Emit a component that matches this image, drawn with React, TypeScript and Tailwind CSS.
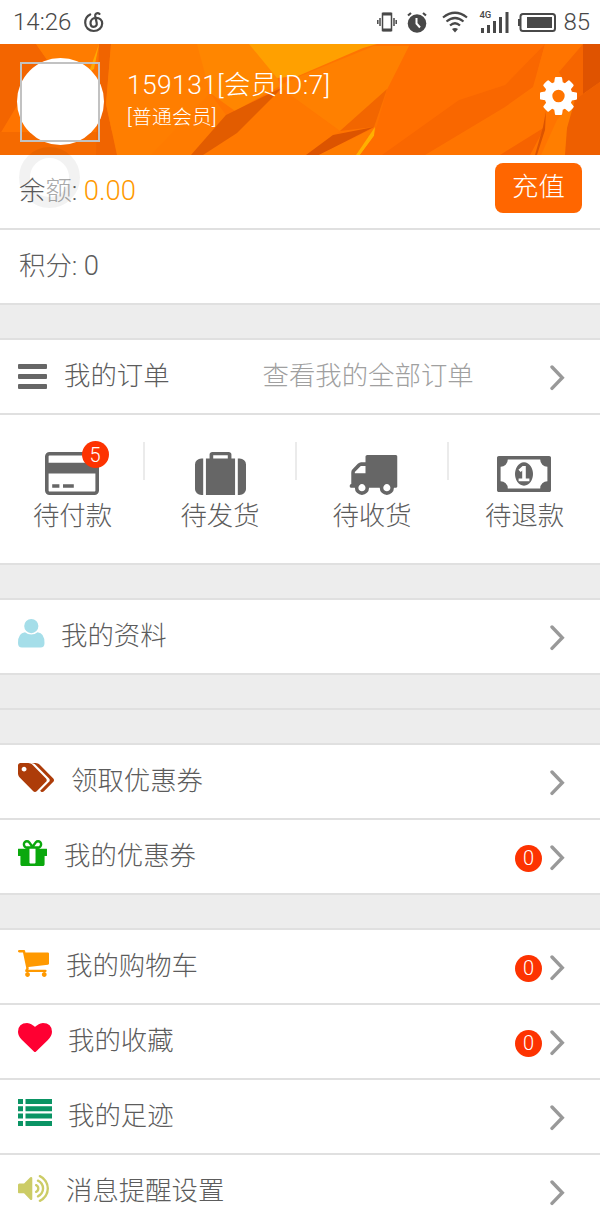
import type { ReactNode } from "react"

const icons = {
  cog: {
    box: "128 128 1536 1536",
    d: "M1152 896q0-106-75-181t-181-75-181 75-75 181 75 181 181 75 181-75 75-181zm512-109v222q0 12-8 23t-20 13l-185 28q-19 54-39 91 35 50 107 138 10 12 10 25t-9 23q-27 37-99 108t-94 71q-12 0-26-9l-138-108q-44 23-91 38-16 136-29 186-7 28-36 28h-222q-14 0-24.500-8.500t-11.500-21.500l-28-184q-49-16-90-37l-141 107q-10 9-25 9-14 0-25-11-126-114-165-168-7-10-7-23 0-12 8-23 15-21 51-66.500t54-70.500q-27-50-41-99l-183-27q-13-2-21-12.500t-8-23.500v-222q0-12 8-23t19-13l186-28q14-46 39-92-40-57-107-138-10-12-10-24 0-10 9-23 26-36 98.500-107.500t94.500-71.500q13 0 26 10l138 107q44-23 91-38 16-136 29-186 7-28 36-28h222q14 0 24.500 8.500t11.500 21.500l28 184q49 16 90 37l142-107q9-9 24-9 13 0 25 10 129 119 165 170 7 8 7 22 0 12-8 23-15 21-51 66.500t-54 70.500q26 50 41 98l183 28q13 2 21 12.500t8 23.500z",
  },
  bars: {
    box: "0 0 29 25",
    d: "M1 0h27q1 0 1 1v3q0 1-1 1H1q-1 0-1-1V1q0-1 1-1zM1 10h27q1 0 1 1v3q0 1-1 1H1q-1 0-1-1v-3q0-1 1-1zM1 20h27q1 0 1 1v3q0 1-1 1H1q-1 0-1-1v-3q0-1 1-1z",
  },
  card: {
    box: "0 128 1920 1536",
    d: "M1760 128q66 0 113 47t47 113v1216q0 66-47 113t-113 47h-1600q-66 0-113-47t-47-113v-1216q0-66 47-113t113-47h1600zm-1600 128q-13 0-22.500 9.500t-9.500 22.500v224h1664v-224q0-13-9.500-22.500t-22.500-9.500h-1600zm1600 1280q13 0 22.500-9.500t9.500-22.500v-608h-1664v608q0 13 9.500 22.500t22.500 9.500h1600zm-1504-128v-128h256v128h-256zm384 0v-128h384v128h-384z",
  },
  suitcase: {
    box: "0 0 1792 1664",
    d: "M640 256h512v-128h-512v128zm-352 0v1408h-64q-92 0-158-66t-66-158v-960q0-92 66-158t158-66h64zm1120 0v1408h-1024v-1408h128v-160q0-40 28-68t68-28h576q40 0 68 28t28 68v160h128zm384 224v960q0 92-66 158t-158 66h-64v-1408h64q92 0 158 66t66 158z",
  },
  truck: {
    box: "64 256 1728 1408",
    d: "M640 1408q0-52-38-90t-90-38-90 38-38 90 38 90 90 38 90-38 38-90zm-384-512h384v-256h-158q-13 0-22 9l-195 195q-9 9-9 22v30zm1280 512q0-52-38-90t-90-38-90 38-38 90 38 90 90 38 90-38 38-90zm256-1088v1024q0 15-4 26.500t-13.500 18.500-16.500 11.500-23.500 6-22.500 2-25.500 0-22.500-.5q0 106-75 181t-181 75-181-75-75-181h-384q0 106-75 181t-181 75-181-75-75-181h-64q-3 0-22.500.5t-25.500 0-22.500-2-23.500-6-16.500-11.500-13.500-18.500-4-26.500q0-26 19-45t45-19v-320q0-8-.5-35t0-38 2.500-34.500 6.500-37 14-30.500 22.500-30l198-198q19-19 50.500-32t58.500-13h160v-192q0-26 19-45t45-19h1024q26 0 45 19t19 45z",
  },
  money: {
    box: "0 256 1920 1280",
    d: "M768 1152h384v-96h-128v-448h-114l-148 137 77 80q42-37 55-57h2v288h-128v96zm512-256q0 70-21 142t-59.500 134-101.500 101-138 39-138-39-101.500-101-59.500-134-21-142 21-142 59.500-134 101.500-101 138-39 138 39 101.500 101 59.500 134 21 142zm512 256v-512q-106 0-181-75t-75-181h-1152q0 106-75 181t-181 75v512q106 0 181 75t75 181h1152q0-106 75-181t181-75zm128-832v1152q0 26-19 45t-45 19h-1792q-26 0-45-19t-19-45v-1152q0-26 19-45t45-19h1792q26 0 45 19t19 45z",
  },
  user: {
    box: "0 0 27 29",
    d: "M13.300 0a7 7 0 1 1 0 14.200a7 7 0 1 1 0-14.200zM7 13.200Q9.800 15.600 13.300 15.600T19.600 13.200Q26.500 13.800 26.500 24Q26.500 28.500 22.500 28.500H4Q0 28.500 0 24Q0 13.800 7 13.200z",
  },
  tags: {
    box: "128 128 1899 1515",
    d: "M576 448q0-53-37.500-90.500t-90.500-37.500-90.500 37.500-37.500 90.500 37.500 90.500 90.500 37.500 90.500-37.500 37.500-90.500zm1067 576q0 53-37 90l-491 492q-39 37-91 37-53 0-90-37l-715-716q-38-37-64.500-101t-26.500-117v-416q0-52 38-90t90-38h416q53 0 117 26.500t102 64.500l715 714q37 39 37 91zm384 0q0 53-37 90l-491 492q-39 37-91 37-36 0-59-14t-53-45l470-470q37-37 37-90 0-52-37-91l-715-714q-38-38-102-64.500t-117-26.500h224q53 0 117 26.500t102 64.500l715 714q37 39 37 91z",
  },
  gift: {
    box: "128 192 1536 1344",
    d: "M1056 1356v-716h-320v716q0 25 18 38.500t46 13.500h192q28 0 46-13.500t18-38.500zm-456-844h195l-126-161q-26-31-69-31-40 0-68 28t-28 68 28 68 68 28zm688-96q0-40-28-68t-68-28q-43 0-69 31l-125 161h194q40 0 68-28t28-68zm376 256v320q0 14-9 23t-23 9h-96v416q0 40-28 68t-68 28h-1088q-40 0-68-28t-28-68v-416h-96q-14 0-23-9t-9-23v-320q0-14 9-23t23-9h440q-93 0-158.500-65.500t-65.500-158.500 65.500-158.500 158.500-65.500q107 0 168 77l128 165 128-165q61-77 168-77 93 0 158.500 65.500t65.500 158.500-65.500 158.500-158.500 65.500h440q14 0 23 9t9 23z",
  },
  cart: {
    box: "64 256 1664 1408",
    d: "M704 1536q0 52-38 90t-90 38-90-38-38-90 38-90 90-38 90 38 38 90zm896 0q0 52-38 90t-90 38-90-38-38-90 38-90 90-38 90 38 38 90zm128-1088v512q0 24-16.500 42.500t-40.500 21.500l-1044 122q13 60 13 70 0 16-24 64h920q26 0 45 19t19 45-19 45-45 19h-1024q-26 0-45-19t-19-45q0-11 8-31.500t16-36 21.500-40 15.500-29.500l-177-823h-204q-26 0-45-19t-19-45 19-45 45-19h256q16 0 28.500 6.500t19.500 15.500 13 24.500 8 26 5.500 29.500 4.500 26h1201q26 0 45 19t19 45z",
  },
  heart: {
    box: "0 128 1792 1536",
    d: "M896 1664q-26 0-44-18l-624-602q-10-8-27.500-26t-55.500-65.500-68-97.500-53.500-121-23.500-138q0-220 127-344t351-124q62 0 126.500 21.500t120 58 95.500 68.500 76 68q36-36 76-68t95.500-68.500 120-58 126.500-21.500q224 0 351 124t127 344q0 221-229 450l-623 600q-18 18-44 18z",
  },
  list: {
    box: "0 0 34 27",
    d: "M0 0h5v5H0zM7.500 0H34v5H7.500zM0 7.300h5v5H0zM7.500 7.300H34v5H7.500zM0 14.600h5v5H0zM7.500 14.600H34v5H7.500zM0 22h5v5H0zM7.500 22H34v5H7.500z",
  },
  volume: {
    box: "64 186 1664 1422",
    d: "M832 352v1088q0 26-19 45t-45 19-45-19l-333-333h-262q-26 0-45-19t-19-45v-384q0-26 19-45t45-19h262l333-333q19-19 45-19t45 19 19 45zm384 544q0 76-42.500 141.500t-112.500 93.500q-10 5-25 5-26 0-45-18.500t-19-45.500q0-21 12-35.500t29-25 34-23 29-36 12-56.500-12-56.500-29-36-34-23-29-25-12-35.500q0-27 19-45.500t45-18.500q15 0 25 5 70 27 112.500 93t42.500 142zm256 0q0 153-85 282.500t-225 188.500q-13 5-25 5-27 0-46-19t-19-45q0-39 39-59 56-29 76-44 74-54 115.500-135.500t41.500-173.500-41.500-173.500-115.500-135.500q-20-15-76-44-39-20-39-59 0-26 19-45t45-19q13 0 26 5 140 59 225 188.500t85 282.500zm256 0q0 230-127 422.500t-338 283.500q-13 5-26 5-26 0-45-19t-19-45q0-36 39-59 7-4 22.500-10.500t22.500-10.500q46-25 82-51 123-91 192-227t69-289-69-289-192-227q-36-26-82-51-7-4-22.500-10.500t-22.500-10.500q-39-23-39-59 0-26 19-45t45-19q13 0 26 5 211 91 338 283.500t127 422.500z",
  },
}

type IconName = keyof typeof icons

function Icon({ name, className }: { name: IconName; className: string }) {
  return (
    <svg viewBox={icons[name].box} preserveAspectRatio="none" fill="currentColor" className={className}>
      <path d={icons[name].d} />
    </svg>
  )
}

function Chevron() {
  return (
    <svg viewBox="0 0 16 26" className="mt-0.5 h-[26px] w-4 shrink-0 text-[#999]" fill="none" stroke="currentColor" strokeWidth="3.4">
      <path d="M2 2 12.300 12.700 2 23.400" strokeLinecap="round" />
    </svg>
  )
}

function Badge({ children, className = "" }: { children: ReactNode; className?: string }) {
  return (
    <span className={`flex size-[27px] items-center justify-center rounded-full bg-[#fd3301] text-xl leading-none text-white ${className}`}>
      {children}
    </span>
  )
}

type RowProps = {
  icon: IconName
  iconClass: string
  label: string
  hint?: string
  count?: number
}

function Row({ icon, iconClass, label, hint, count }: RowProps) {
  return (
    <div className="flex h-[75px] items-center border-b-2 border-[#e0e0e0] bg-white pr-[34px] pl-[18px]">
      <Icon name={icon} className={`shrink-0 ${iconClass}`} />
      <span>{label}</span>
      {hint && <span className="ml-[93px] text-[#a0a0a0]">{hint}</span>}
      <div className="ml-auto flex items-center gap-2">
        {count !== undefined && <Badge className="mt-[3px]">{count}</Badge>}
        <Chevron />
      </div>
    </div>
  )
}

const orders: { icon: IconName; iconClass: string; label: string; count?: number }[] = [
  { icon: "card", iconClass: "h-[43px] w-[54px]", label: "待付款", count: 5 },
  { icon: "suitcase", iconClass: "h-[43px] w-[51px] translate-x-px", label: "待发货" },
  { icon: "truck", iconClass: "h-10 w-12 translate-x-[2.5px]", label: "待收货" },
  { icon: "money", iconClass: "h-9 w-[54px]", label: "待退款" },
]

const sections: RowProps[][] = [
  [{ icon: "user", iconClass: "mr-4 mb-[7px] h-[29px] w-[27px] text-[#a5dee9]", label: "我的资料" }],
  [],
  [
    { icon: "tags", iconClass: "mr-[17px] mb-2 h-[29px] w-9 text-[#ad3c09]", label: "领取优惠券" },
    { icon: "gift", iconClass: "mr-[17px] mb-2 h-[26px] w-[29px] text-[#0aa80d]", label: "我的优惠券", count: 0 },
  ],
  [
    { icon: "cart", iconClass: "mr-[17px] mb-1.5 h-[27px] w-[31px] text-[#ff9900]", label: "我的购物车", count: 0 },
    { icon: "heart", iconClass: "mr-4 mb-2 h-[29px] w-[34px] text-[#ff0032]", label: "我的收藏", count: 0 },
    { icon: "list", iconClass: "mr-4 mb-2 h-[27px] w-[34px] text-[#0a9464]", label: "我的足迹" },
    { icon: "volume", iconClass: "mr-[17px] mb-1.5 h-[27px] w-[31px] text-[#cccc66]", label: "消息提醒设置" },
  ],
]

function StatusBar() {
  return (
    <div className="flex h-11 items-center bg-white text-[#484848]">
      <span className="ml-[13px] w-[59px] text-[24px]">14:26</span>
      <svg viewBox="0 0 20 22" className="ml-3 h-[22px] w-5" fill="none" stroke="currentColor" strokeWidth="2.200" strokeLinecap="round">
        <path d="M6.200 3.500C3 5 1.200 8 1.200 11.700 1.200 16.500 5 20 9.700 20s8.500-3.300 8.500-7.500C18.200 9 15.500 6.800 12 6.800 8.500 6.800 6.500 9.500 6.500 12.200c0 2 1.200 3.600 3.200 3.600s3.500-1.400 3-3.800L11.200 5C10.800 2.800 13.200 1.200 15.500 2.800" />
      </svg>
      <svg viewBox="0 0 20 20" className="ml-auto h-5 w-5" fill="none" stroke="currentColor" strokeWidth="1.500">
        <path d="M5.500 1.500h9v17h-9zM3 6v8M.800 8v4M17 6v8M19.200 8v4" />
        <path d="M5.500 2h9M5.500 18h9" strokeWidth="3" />
      </svg>
      <svg viewBox="0 0 20 22" className="ml-2.5 h-[22px] w-5">
        <circle cx="10" cy="12.500" r="9.300" fill="currentColor" />
        <path d="M1 4.500 4 2M19 4.500 16 2" stroke="currentColor" strokeWidth="2.200" />
        <path d="M9.500 7v5.500l3.500 4" fill="none" stroke="#fff" strokeWidth="2" />
      </svg>
      <svg viewBox="0 0 26 22" className="ml-[15px] h-[22px] w-[26px]" fill="none" stroke="currentColor" strokeWidth="2.200">
        <path d="M1 6.500Q13-3 25 6.500M4.500 10.500Q13 3.500 21.500 10.500M8 14.500Q13 10 18 14.500" />
        <path d="M10 18Q13 16 16 18L13 21.500z" fill="currentColor" stroke="none" />
      </svg>
      <div className="relative ml-[11px] h-[22px] w-[30px]">
        <span className="absolute -top-0.5 left-0 text-[9.500px] leading-[12px] font-medium">4G</span>
        <svg viewBox="0 0 30 22" className="size-full" fill="currentColor">
          <path d="M2 17h3v5H2zM8 14h3v8H8zM14 10h3v12h-3zM20 6h3v16h-3zM26.500 1h3v21h-3z" />
        </svg>
      </div>
      <svg viewBox="0 0 38 19" className="ml-[9px] h-[19px] w-[38px]" fill="none" stroke="currentColor" strokeWidth="2">
        <rect x="2.500" y="1" width="34.500" height="17" rx="2.500" />
        <path d="M1 6v7" />
        <rect x="9" y="4" width="25" height="11" fill="currentColor" stroke="none" />
      </svg>
      <span className="mr-2.5 ml-[7px] text-[24px]">85</span>
    </div>
  )
}

function HeaderArt() {
  return (
    <svg viewBox="0 0 600 111" preserveAspectRatio="none" className="absolute inset-0 size-full">
      <path fill="#ff7400" d="M0 0h600v111H0z" />
      <path fill="#f36500" d="M0 0h36l14 20L18 60 0 90z" />
      <path fill="#ff7c00" d="M36 0h64L90 32 50 20z" />
      <path fill="#f56a00" d="M0 88h115l5 23H0z" />
      <path fill="#f06400" d="M99 0h12l-5 60 11 51H96z" />
      <path fill="#ffa800" d="M99 0 89 28l5-3z" />
      <path fill="#ff7e00" d="M111 0h87l12 50-19 61h-74l-11-51z" />
      <path fill="#ff8600" d="M197 0h54l26 32 3 10-45 25-25-18z" />
      <path fill="#ff7b00" d="m210 49 16 22-35 40h-40z" />
      <path fill="#ff7800" d="m279 43 61 44-34 24H203l34-22z" />
      <path fill="#ff8000" d="M374 2h36l-23 44-47 41-62-45 20-9z" />
      <path fill="#ffa000" d="M249 0h128l-14 4-65 28-21 2z" />
      <path fill="#e25c00" d="m283 43-46 46-34 22h-12l35-40z" />
      <path fill="#f26600" d="m387 45-13 38-34 4z" />
      <path fill="#dc5400" d="m374 83-41 8-27 20h13z" />
      <path fill="#ff7c00" d="m374 84-55 27h37z" />
      <path fill="#ffb000" d="m375 83-1 9-14 19h-4z" />
      <path fill="#ff6e00" d="M410 0h135l-40 41-46 15-53 55h-46l14-19 13-46z" />
      <path fill="#f96700" d="m545 0-12 43-28 20-80 48h-43l77-55 46-15z" />
      <path fill="#f66300" d="m545 83-15 28h-30z" />
      <path fill="#ff7400" d="M545 0h35l-22 28 17 28-10 55h-28l8-35-7-50z" />
      <path fill="#f66500" d="M583 0v52l-9 5-15-29z" />
      <path fill="#ff7e00" d="m574 57-17 19-16 35h24z" />
      <path fill="#ee5f00" d="M600 38v73h-35l2-27 8-28z" />
      <path fill="#df5300" d="M583 0h17v38l-17 12z" />
      <path fill="#dc5400" d="m546 67-1 19-8 25h-2l8-28z" />
    </svg>
  )
}

export default function App() {
  return (
    <div className="h-[1226px] w-[600px] overflow-hidden bg-[#ededed] font-['Roboto','Noto_Sans_CJK_SC',sans-serif] text-[26.4px] font-light text-[#5c5c5c]">
      <StatusBar />

      <header className="relative flex h-[111px] items-center">
        <HeaderArt />
        <div className="relative mt-[3px] ml-[17px] size-[87px] rounded-full bg-white pt-1 pl-[3px]">
          <div className="size-20 border-2 border-[#c2c2c2]" />
        </div>
        <div className="relative mt-px ml-[23px] text-white">
          <div className="leading-[34px] tracking-[0.4px]">159131[会员ID:7]</div>
          <div className="mt-0.5 text-[19.800px] leading-7 tracking-[0.2px]">[普通会员]</div>
        </div>
        <Icon name="cog" className="relative mr-[23px] mb-[7px] ml-auto h-[38px] w-[37px] text-white" />
      </header>

      <div className="relative flex h-[75px] items-center border-b-2 border-[#e0e0e0] bg-white pr-[18px] pl-[19px]">
        <span>余<span className="text-[#aaa]">额</span>: <span className="text-[27.400px] text-[#ff9900]">0.00</span></span>
        <span className="mb-[7px] ml-auto flex h-[50px] w-[87px] items-center justify-center rounded-lg bg-[#ff6600] text-white">充值</span>
        {/* Floating assistive button */}
        <div className="absolute -top-2 left-[19px] size-[61px] rounded-full border-[11px] border-black/[0.05]" />
      </div>
      <div className="flex h-[75px] items-center border-b-2 border-[#e0e0e0] bg-white px-[19px]">
        <span>积分: <span className="text-[27.400px]">0</span></span>
      </div>

      <section className="mt-[33px] border-t-2 border-[#e0e0e0]">
        <Row icon="bars" iconClass="mr-[17px] h-[25px] w-[29px] text-[#666]" label="我的订单" hint="查看我的全部订单" />
        <div className="grid h-[150px] grid-cols-[143px_152px_152px_153px] border-b-2 border-[#e0e0e0] bg-white pt-[27px]">
          {orders.map((order, i) => (
            <div key={order.label} className="relative flex flex-col items-center">
              {i > 0 && <div className="absolute top-0 left-0 h-[38px] w-0.5 bg-[#ebebeb]" />}
              <div className="flex h-[53px] items-end justify-center text-[#666]">
                <div className={order.icon === "money" ? "relative mb-[3px]" : "relative"}>
                  <Icon name={order.icon} className={order.iconClass} />
                  {order.count && <Badge className="absolute -top-[11px] -right-[10px]">{order.count}</Badge>}
                </div>
              </div>
              <span className="mt-0.5 ml-0.5 leading-[38px]">{order.label}</span>
            </div>
          ))}
        </div>
      </section>

      {sections.map((rows, i) => (
        <section key={i} className="mt-[33px] border-t-2 border-[#e0e0e0]">
          {rows.map((row) => (
            <Row key={row.label} {...row} />
          ))}
        </section>
      ))}
    </div>
  )
}
